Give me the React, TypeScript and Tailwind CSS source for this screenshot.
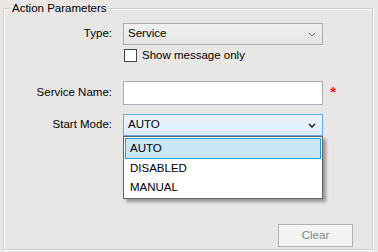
import React from "react";

function Chevron({ dark }: { dark?: boolean }) {
  return (
    <svg width="8" height="5" viewBox="0 0 8 5" className="shrink-0">
      <path
        d="M1 1 L4 4 L7 1"
        fill="none"
        stroke={dark ? "#1a1a1a" : "#606060"}
        strokeWidth={dark ? 1.4 : 1}
      />
    </svg>
  );
}

const modes = ["AUTO", "DISABLED", "MANUAL"];

export default function App() {
  return (
    <div
      className="h-[252px] w-[378px] overflow-hidden bg-[#e8e7e5] pt-[8px] pl-[3px] text-[11.5px] text-black"
      style={{ fontFamily: '"Liberation Sans", Arial, sans-serif' }}
    >
      {/* Group box */}
      <div className="relative flex h-[242px] w-[370px] flex-col border border-[#d0d0d0] shadow-[inset_1px_1px_0_#fff,1px_1px_0_#fff]">
        <span className="absolute -top-[8px] left-[7px] bg-[#e8e7e5] px-[1px] leading-[14px]">
          Action Parameters
        </span>

        <div className="grid grid-cols-[108px_200px] gap-x-[11px] pt-[14px]">
          {/* Type */}
          <div className="flex h-[22px] items-center justify-end">Type:</div>
          <div className="flex h-[22px] items-center justify-between border border-[#acacac] bg-gradient-to-b from-[#f0f0f0] to-[#e5e5e5] pr-[6px] pl-[4px]">
            <span>Service</span>
            <Chevron />
          </div>

          {/* Show message only */}
          <div />
          <div className="mt-[4px] flex h-[13px] items-center gap-[5px] pl-[1px]">
            <div className="h-[13px] w-[13px] border border-[#444] bg-white" />
            <span>Show message only</span>
          </div>

          {/* Service Name */}
          <div className="mt-[19px] flex h-[24px] items-center justify-end">
            Service Name:
          </div>
          <div className="relative mt-[19px] h-[24px] border border-[#abadb3] bg-white">
            <span className="absolute top-[2px] -right-[14px] text-[15px] leading-none font-bold text-[#ff1a1a]">
              *
            </span>
          </div>

          {/* Start Mode */}
          <div className="mt-[9px] flex h-[22px] items-center justify-end">
            Start Mode:
          </div>
          <div className="relative mt-[9px]">
            <div className="flex h-[22px] items-center justify-between border border-[#6aa8e8] bg-gradient-to-b from-[#ebf4fd] to-[#dcecfc] pr-[6px] pl-[4px]">
              <span>AUTO</span>
              <Chevron dark />
            </div>
            {/* Open dropdown */}
            <div className="absolute top-[22px] left-0 z-10 w-[200px] border border-[#646464] bg-white p-[1px] shadow-[3px_3px_3px_rgba(0,0,0,0.35)]">
              {modes.map((m, i) => (
                <div
                  key={m}
                  className={`flex items-center border pl-[4px] ${
                    i === 0
                      ? "h-[21px] border-[#26a0da] bg-[#c9e7f6]"
                      : "h-[19px] border-transparent"
                  }`}
                >
                  {m}
                </div>
              ))}
            </div>
          </div>
        </div>

        {/* Clear button */}
        <div className="mt-auto mb-[2px] flex justify-end pr-[19px]">
          <div className="flex h-[23px] w-[75px] items-center justify-center border border-[#adb2b5] bg-[#f4f4f4] text-[#838383]">
            Clear
          </div>
        </div>
      </div>
    </div>
  );
}
